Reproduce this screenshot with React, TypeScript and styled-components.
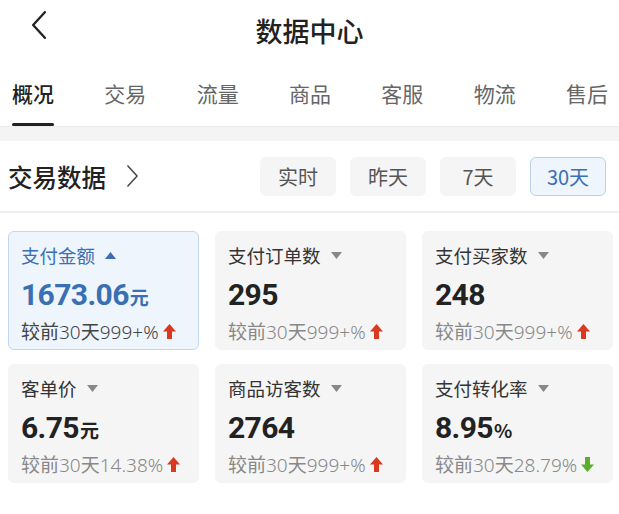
import React from "react";
import styled, { createGlobalStyle } from "styled-components";

const GlobalStyle = createGlobalStyle`
    body {
        margin: 0;
        background: #fff;
        font-family: "Noto Sans CJK SC", "Noto Sans", sans-serif;
        color: #222;
    }
`;

const Page = styled.div`
    width: 619px;
    display: flex;
    flex-direction: column;
`;

const Header = styled.div`
    height: 58px;
    display: flex;
    align-items: center;
    justify-content: center;
    position: relative;
`;

const BackButton = styled.div`
    position: absolute;
    left: 31px;
    top: 11px;
    width: 20px;
    height: 30px;
`;

const Title = styled.h1`
    margin: 0;
    padding-top: 2px;
    font-size: 27px;
    font-weight: 500;
    color: #222;
    line-height: 1;
`;

const Tabs = styled.div`
    height: 68px;
    display: flex;
    justify-content: space-between;
    padding: 0 11px 0 12px;
`;

const Tab = styled.div<{ $active?: boolean }>`
    position: relative;
    display: flex;
    align-items: center;
    padding-top: 2px;
    font-size: 21px;
    color: ${(p) => (p.$active ? "#222" : "#666")};
    font-weight: ${(p) => (p.$active ? 500 : 400)};
    &::after {
        content: "";
        display: ${(p) => (p.$active ? "block" : "none")};
        position: absolute;
        left: 0;
        right: 0;
        bottom: 0;
        height: 3px;
        border-radius: 2px;
        background: #222;
    }
`;

const Band = styled.div`
    height: 14px;
    background: #f4f4f4;
    border-top: 1px solid #ececec;
`;

const SectionHeader = styled.div`
    height: 70px;
    display: flex;
    align-items: center;
    justify-content: space-between;
    padding: 0 13px 0 8px;
    border-bottom: 2px solid #efefef;
`;

const SectionTitle = styled.div`
    display: flex;
    align-items: center;
    gap: 20px;
    font-size: 24.5px;
    font-weight: 500;
    color: #222;
`;

const Periods = styled.div`
    display: flex;
    gap: 14px;
`;

const Period = styled.div<{ $active?: boolean }>`
    width: 76px;
    height: 39px;
    box-sizing: border-box;
    display: flex;
    align-items: center;
    justify-content: center;
    border-radius: 6px;
    font-size: 20px;
    background: ${(p) => (p.$active ? "#eef5fc" : "#f5f5f5")};
    border: 1px solid ${(p) => (p.$active ? "#b8d1ec" : "#f5f5f5")};
    color: ${(p) => (p.$active ? "#3a6fb3" : "#555")};
`;

const Grid = styled.div`
    display: grid;
    grid-template-columns: repeat(3, 191px);
    column-gap: 16px;
    row-gap: 14px;
    padding: 18px 0 0 8px;
`;

const Card = styled.div<{ $active?: boolean }>`
    height: 119px;
    box-sizing: border-box;
    border-radius: 6px;
    padding: 10px 0 0 12px;
    display: flex;
    flex-direction: column;
    background: ${(p) => (p.$active ? "#eef5fd" : "#f5f5f5")};
    border: 1px solid ${(p) => (p.$active ? "#c3d8ef" : "#f5f5f5")};
`;

const Label = styled.div<{ $active?: boolean }>`
    display: flex;
    align-items: center;
    gap: 10px;
    height: 26px;
    font-size: 18.5px;
    color: ${(p) => (p.$active ? "#3a6fb3" : "#333")};
`;

const Value = styled.div<{ $active?: boolean }>`
    margin-top: 11px;
    height: 32px;
    display: flex;
    align-items: baseline;
    font-family: "Roboto", "Liberation Sans", sans-serif;
    font-weight: 700;
    font-size: 30px;
    line-height: 32px;
    letter-spacing: -0.6px;
    color: ${(p) => (p.$active ? "#3a6fb3" : "#222")};
`;

const Unit = styled.span`
    font-family: "Noto Sans CJK SC", sans-serif;
    font-size: 19px;
    font-weight: 700;
    margin-left: 1px;
    letter-spacing: 0;
`;

const Compare = styled.div<{ $active?: boolean }>`
    margin-top: 6px;
    display: flex;
    align-items: center;
    gap: 4px;
    font-size: 19px;
    color: ${(p) => (p.$active ? "#444" : "#888")};
    white-space: nowrap;
`;

const Digits = styled.span`
    font-family: "Noto Sans", sans-serif;
    font-weight: 300;
`;

const Chevron = ({ dir, size, color, width }: { dir: "left" | "right"; size: number; color: string; width: number }) => (
    <svg width={size / 2 + 2} height={size} viewBox="0 0 12 24">
        <path
            d={dir === "left" ? "M11 1 L1 12 L11 23" : "M1 1 L11 12 L1 23"}
            fill="none"
            stroke={color}
            strokeWidth={width}
            strokeLinecap="round"
            strokeLinejoin="round"
        />
    </svg>
);

const Caret = ({ up, color }: { up?: boolean; color: string }) => (
    <svg width="11" height="7" viewBox="0 0 11 7">
        <path d={up ? "M5.5 0 L11 7 L0 7 Z" : "M0 0 L11 0 L5.5 7 Z"} fill={color} />
    </svg>
);

const Arrow = ({ up }: { up: boolean }) => (
    <svg width="13" height="15" viewBox="0 0 13 15">
        {up ? (
            <path d="M6.5 0 L13 7.5 L9 7.5 L9 15 L4 15 L4 7.5 L0 7.5 Z" fill="#d8391f" />
        ) : (
            <path d="M6.5 15 L13 7.5 L9 7.5 L9 0 L4 0 L4 7.5 L0 7.5 Z" fill="#5aae2c" />
        )}
    </svg>
);

type Metric = {
    label: string;
    value: string;
    unit?: string;
    change: string;
    up: boolean;
    active?: boolean;
};

const metrics: Metric[] = [
    { label: "支付金额", value: "1673.06", unit: "元", change: "999+%", up: true, active: true },
    { label: "支付订单数", value: "295", change: "999+%", up: true },
    { label: "支付买家数", value: "248", change: "999+%", up: true },
    { label: "客单价", value: "6.75", unit: "元", change: "14.38%", up: true },
    { label: "商品访客数", value: "2764", change: "999+%", up: true },
    { label: "支付转化率", value: "8.95", unit: "%", change: "28.79%", up: false },
];

const tabs = ["概况", "交易", "流量", "商品", "客服", "物流", "售后"];
const periods = ["实时", "昨天", "7天", "30天"];

export default function App() {
    return (
        <Page>
            <GlobalStyle />
            <Header>
                <BackButton>
                    <Chevron dir="left" size={28} color="#222" width={2} />
                </BackButton>
                <Title>数据中心</Title>
            </Header>
            <Tabs>
                {tabs.map((t, i) => (
                    <Tab key={t} $active={i === 0}>{t}</Tab>
                ))}
            </Tabs>
            <Band />
            <SectionHeader>
                <SectionTitle>
                    交易数据
                    <Chevron dir="right" size={22} color="#444" width={1.6} />
                </SectionTitle>
                <Periods>
                    {periods.map((p, i) => (
                        <Period key={p} $active={i === periods.length - 1}>{p}</Period>
                    ))}
                </Periods>
            </SectionHeader>
            <Grid>
                {metrics.map((m) => (
                    <Card key={m.label} $active={m.active}>
                        <Label $active={m.active}>
                            {m.label}
                            <Caret up={m.active} color={m.active ? "#3a6fb3" : "#888"} />
                        </Label>
                        <Value $active={m.active}>
                            {m.value}
                            {m.unit && <Unit>{m.unit}</Unit>}
                        </Value>
                        <Compare $active={m.active}>
                            <span>
                                较前<Digits>30</Digits>天<Digits>{m.change}</Digits>
                            </span>
                            <Arrow up={m.up} />
                        </Compare>
                    </Card>
                ))}
            </Grid>
        </Page>
    );
}
